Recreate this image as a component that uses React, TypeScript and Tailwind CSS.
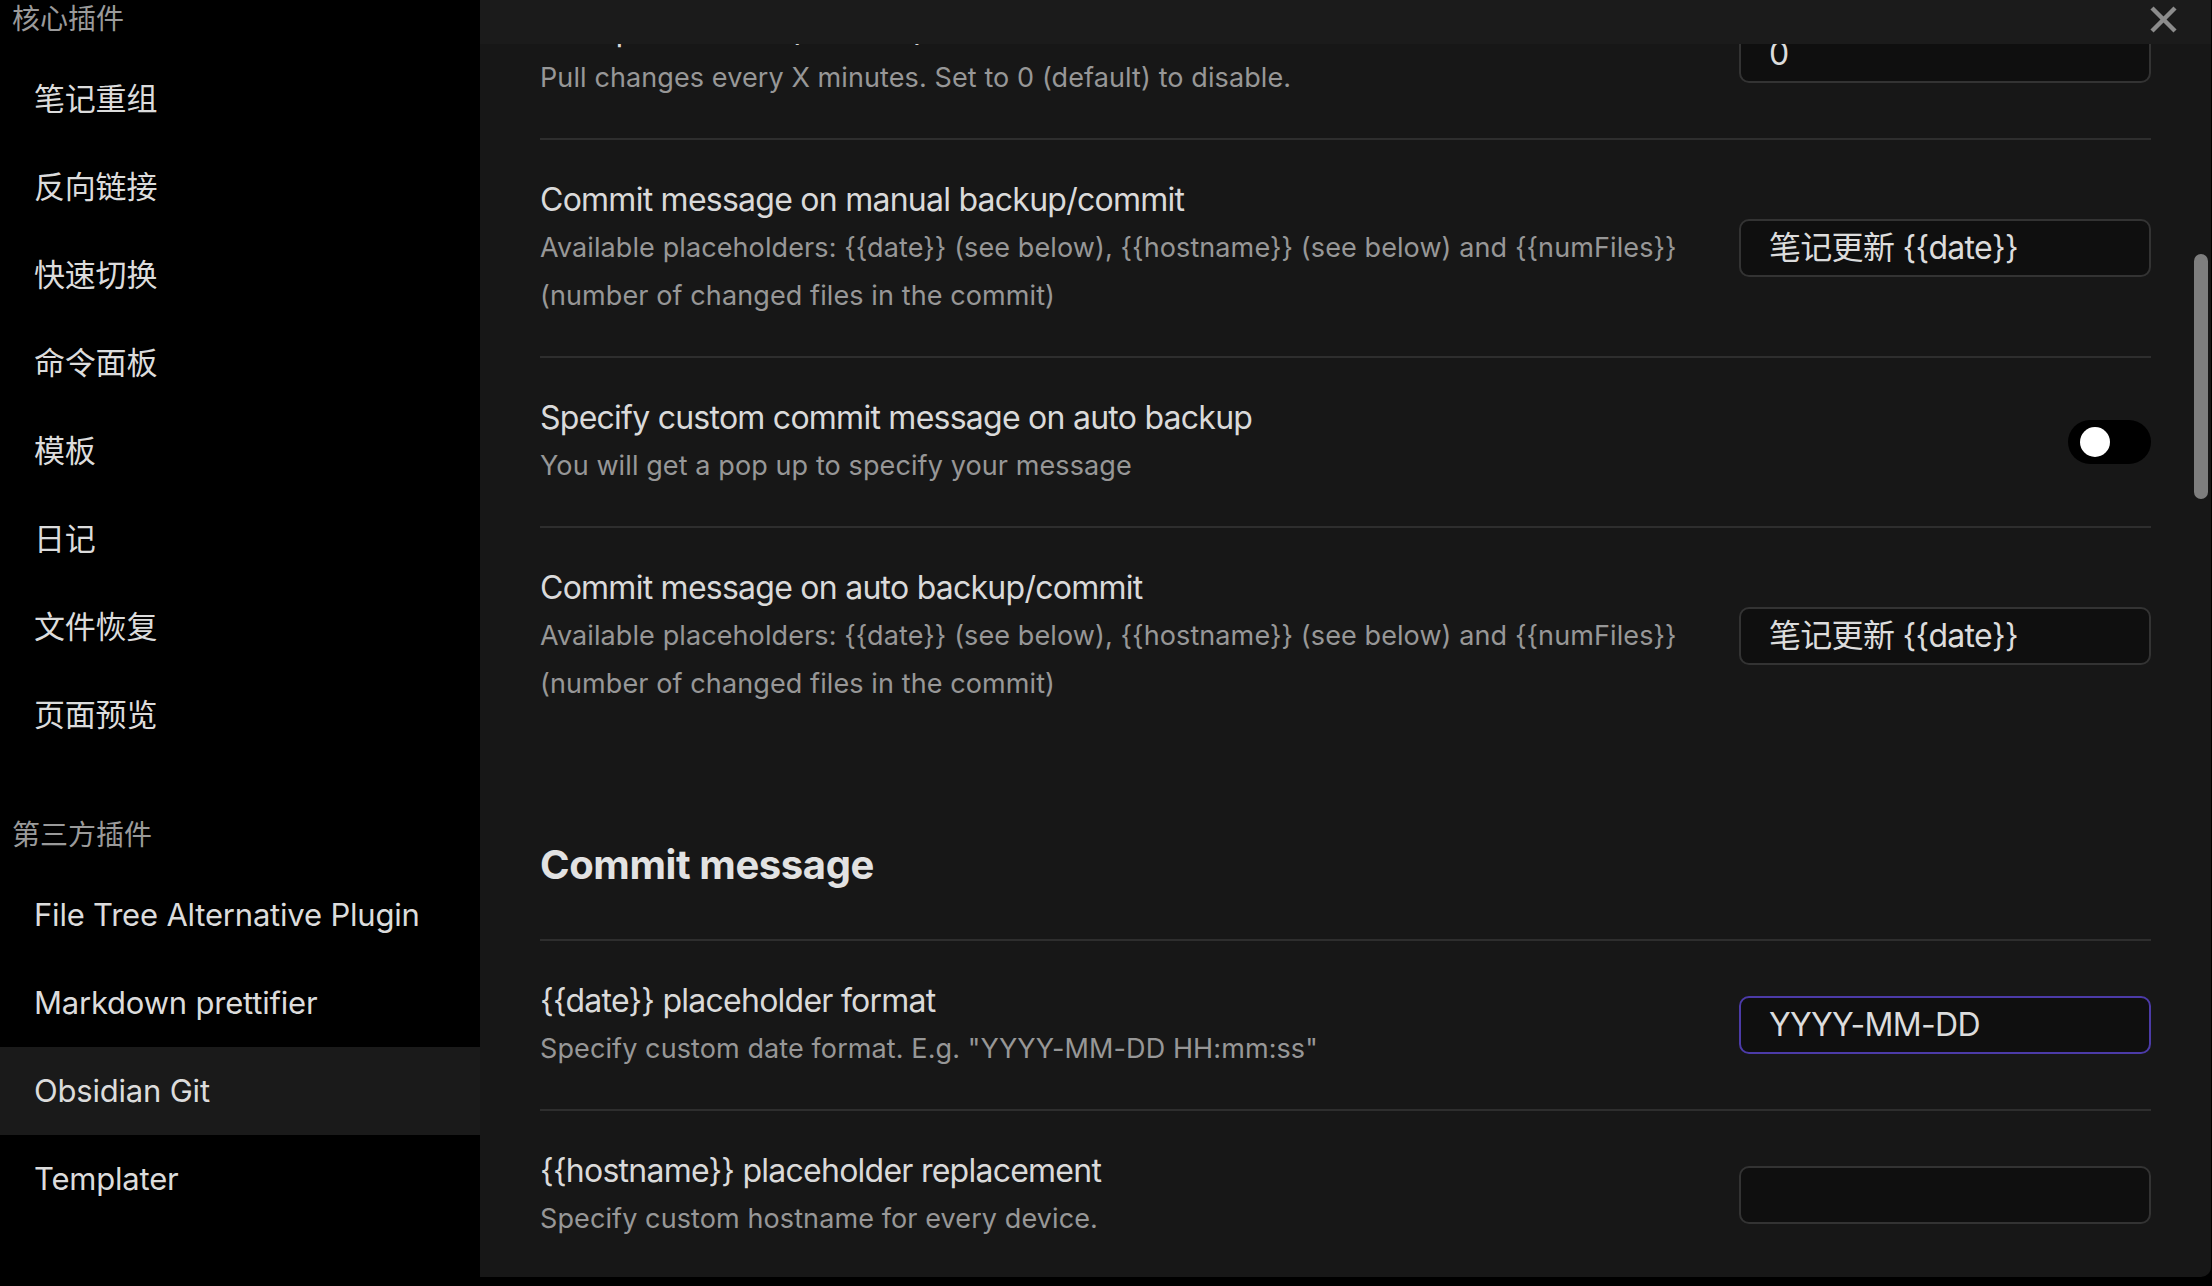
import React from "react";

const FONT = { fontFamily: "Inter, 'Noto Sans CJK SC', sans-serif" };

function SideHeader({ label }: { label: string }) {
  return (
    <div className="pt-[58px] pb-[18px] pl-[12px] text-[28px] leading-[36px] text-[#9a9a9a]">
      {label}
    </div>
  );
}

function SideItem({ label, active }: { label: string; active?: boolean }) {
  return (
    <div
      className={
        "flex h-[88px] items-center pl-[34px] text-[31px] tracking-[-0.2px] text-[#dcdcdc] " +
        (active ? "bg-[#1a1a1a]" : "")
      }
    >
      {label}
    </div>
  );
}

function TextBox({ value, focused }: { value: string; focused?: boolean }) {
  return (
    <div
      className={
        "flex h-[58px] w-[412px] shrink-0 items-center rounded-[10px] border-2 bg-[#0f0f0f] pl-[28px] text-[32px] tracking-[-0.7px] text-[#dcdcdc] " +
        (focused ? "border-[#4c3ba8]" : "border-[#333333]")
      }
    >
      {value}
    </div>
  );
}

function Toggle() {
  return (
    <div className="flex h-[44px] w-[83px] shrink-0 items-center rounded-full bg-black pl-[12px]">
      <div className="h-[30px] w-[30px] rounded-full bg-white" />
    </div>
  );
}

function Row({
  title,
  desc,
  control,
  border = true,
}: {
  title: string;
  desc: React.ReactNode;
  control: React.ReactNode;
  border?: boolean;
}) {
  return (
    <div
      className={
        "flex items-center gap-[40px] py-[36px] " +
        (border ? "border-t-2 border-[#2e2e2e]" : "")
      }
    >
      <div className="min-w-0 flex-1">
        <div className="whitespace-nowrap text-[32px] leading-[48px] tracking-[-0.75px] text-[#dadada]">
          {title}
        </div>
        <div className="text-[27px] leading-[48px] tracking-[0.1px] text-[#979797]">{desc}</div>
      </div>
      {control}
    </div>
  );
}

const placeholderDesc = (
  <>
    <div className="whitespace-nowrap">
      Available placeholders: {"{{date}}"} (see below), {"{{hostname}}"} (see below) and {"{{numFiles}}"}
    </div>
    <div className="whitespace-nowrap">(number of changed files in the commit)</div>
  </>
);

export default function App() {
  return (
    <div className="flex h-[1286px] w-[2212px] overflow-hidden bg-black" style={FONT}>
      <aside className="w-[480px] shrink-0 overflow-hidden bg-black">
        <div className="-mt-[57px]">
          <SideHeader label="核心插件" />
          <SideItem label="笔记重组" />
          <SideItem label="反向链接" />
          <SideItem label="快速切换" />
          <SideItem label="命令面板" />
          <SideItem label="模板" />
          <SideItem label="日记" />
          <SideItem label="文件恢复" />
          <SideItem label="页面预览" />
          <SideHeader label="第三方插件" />
          <SideItem label="File Tree Alternative Plugin" />
          <SideItem label="Markdown prettifier" />
          <SideItem label="Obsidian Git" active />
          <SideItem label="Templater" />
        </div>
      </aside>

      <main className="relative mr-[1px] h-[1277px] flex-1 overflow-hidden rounded-br-[10px] bg-[#171717]">
        <div className="-mt-[30px] px-[60px]">
          <Row
            border={false}
            title="Auto pull interval (minutes)"
            desc="Pull changes every X minutes. Set to 0 (default) to disable."
            control={<TextBox value="0" />}
          />
          <Row
            title="Commit message on manual backup/commit"
            desc={placeholderDesc}
            control={<TextBox value="笔记更新 {{date}}" />}
          />
          <Row
            title="Specify custom commit message on auto backup"
            desc="You will get a pop up to specify your message"
            control={<Toggle />}
          />
          <Row
            title="Commit message on auto backup/commit"
            desc={placeholderDesc}
            control={<TextBox value="笔记更新 {{date}}" />}
          />
          <div className="pt-[97px] pb-[50px] text-[40px] font-bold leading-[48px] tracking-[-0.4px] text-[#e2e2e2]">
            Commit message
          </div>
          <Row
            title="{{date}} placeholder format"
            desc={'Specify custom date format. E.g. "YYYY-MM-DD HH:mm:ss"'}
            control={<TextBox value="YYYY-MM-DD" focused />}
          />
          <Row
            title="{{hostname}} placeholder replacement"
            desc="Specify custom hostname for every device."
            control={<TextBox value="" />}
          />
        </div>

        <div className="absolute left-0 right-0 top-0 flex h-[44px] justify-end bg-[#1b1b1b] pr-[34px] pt-[6px]">
          <svg width="27" height="27" viewBox="0 0 27 27">
            <line x1="2" y1="2" x2="25" y2="25" stroke="#8c8c8c" strokeWidth="4.5" />
            <line x1="25" y1="2" x2="2" y2="25" stroke="#8c8c8c" strokeWidth="4.5" />
          </svg>
        </div>

        <div className="absolute right-[3px] top-[254px] h-[245px] w-[14px] rounded-full bg-[#7e7e7e]" />
      </main>
    </div>
  );
}
